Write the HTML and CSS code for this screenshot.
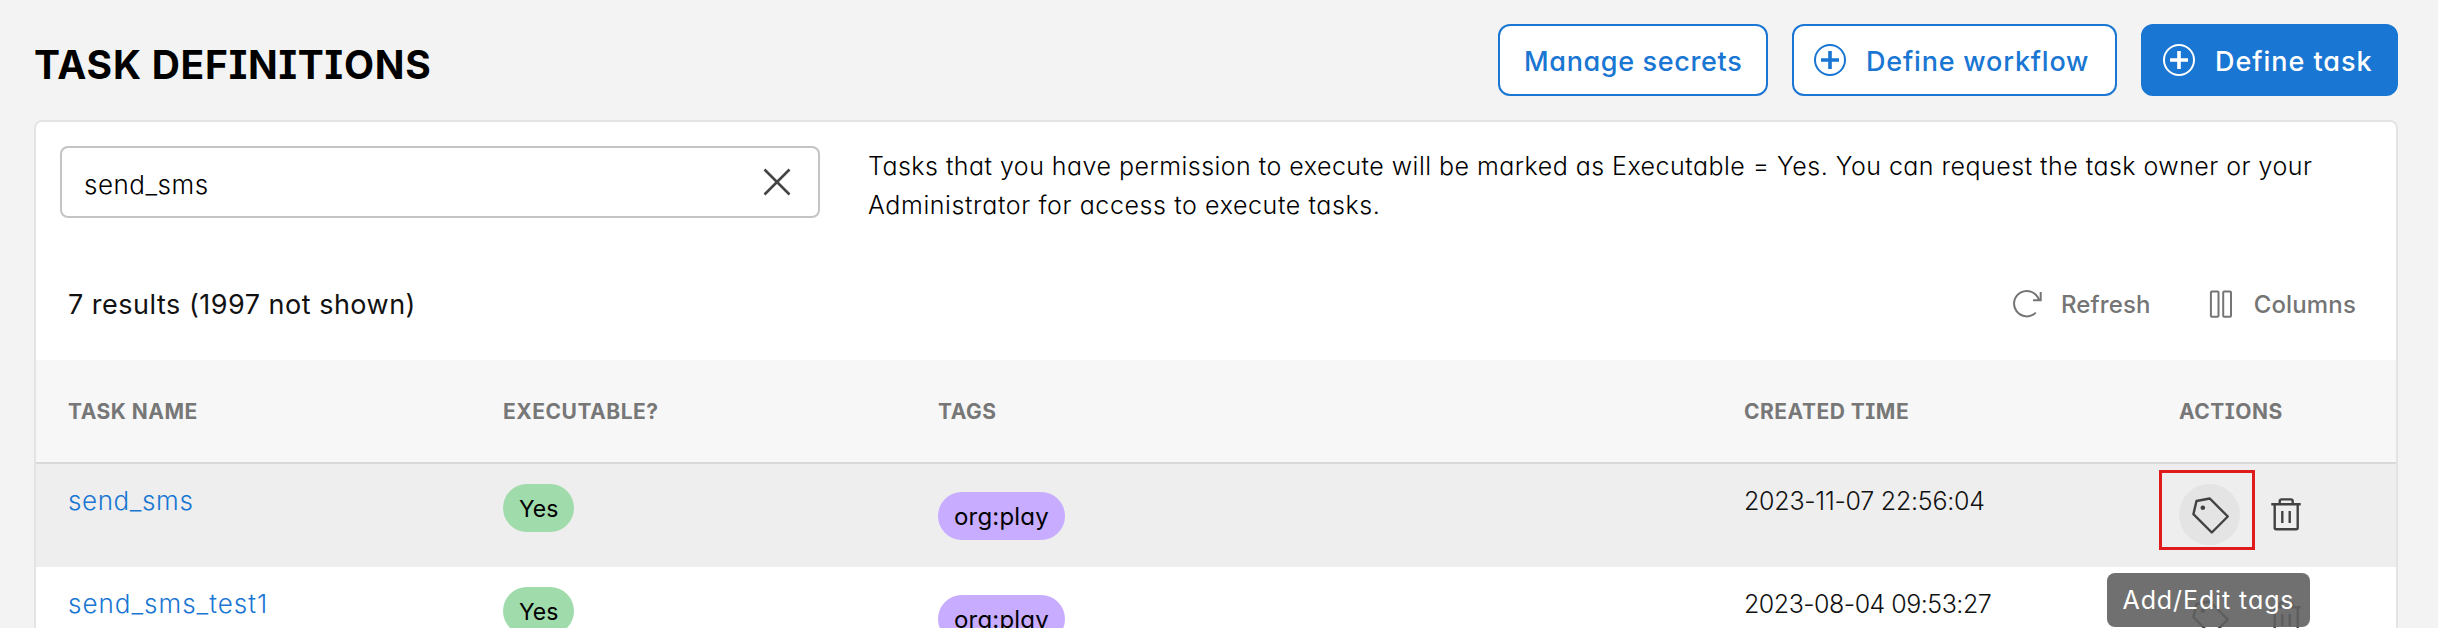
FILE: index.html
```html
<!DOCTYPE html>
<html lang="en">
<head>
<meta charset="utf-8">
<title>Task Definitions</title>
<link rel="stylesheet" href="styles.css">
</head>
<body>
<header class="page-header">
  <h1 class="page-title">TASK DEFINITIONS</h1>
  <div class="header-actions">
    <button class="btn btn-secrets"><span class="label">Manage secrets</span></button>
    <button class="btn btn-workflow"><svg class="plus" viewBox="0 0 32 32"><circle cx="16" cy="16" r="15"/><path d="M16 7v18M7 16h18"/></svg><span class="label">Define workflow</span></button>
    <button class="btn btn-task"><svg class="plus" viewBox="0 0 32 32"><circle cx="16" cy="16" r="15"/><path d="M16 7v18M7 16h18"/></svg><span class="label">Define task</span></button>
  </div>
</header>
<main class="card">
  <section class="filter">
    <div class="search"><span>send_sms</span><svg class="clear" viewBox="0 0 28 28"><path d="M1.5 1.5l25 25M26.5 1.5l-25 25"/></svg></div>
    <p class="hint">Tasks that you have permission to execute will be marked as Executable = Yes. You can request the task owner or your<br><span class="hint-end">Administrator for access to execute tasks.</span></p>
  </section>
  <section class="toolbar">
    <div class="count">7 results (1997 not shown)</div>
    <div class="tools">
      <div class="tool tool-refresh"><svg class="refresh" viewBox="0 0 30 30"><path d="M22.8 23.6A12.7 12.7 0 1 1 25.8 10.6M27.7 3v8.3H20"/></svg><span>Refresh</span></div>
      <div class="tool tool-columns"><svg class="columns" viewBox="0 0 24 30"><rect x="1.9" y="2.5" width="7.6" height="25.3" rx="1"/><rect x="14.2" y="2.5" width="7.8" height="25.3" rx="1"/></svg><span>Columns</span></div>
    </div>
  </section>
  <section class="table">
    <div class="row head"><div>TASK NAME</div><div>EXECUTABLE?</div><div>TAGS</div><div>CREATED TIME</div><div>ACTIONS</div></div>
    <div class="row active">
      <div class="cell"><a class="link">send_sms</a></div>
      <div class="cell"><span class="pill yes">Yes</span></div>
      <div class="cell"><span class="pill tag">org:play</span></div>
      <div class="cell"><span class="date">2023-11-07 22:56:04</span></div>
      <div class="cell actions">
        <span class="icon-btn hover"><svg class="i-tag" viewBox="0 0 38 38"><path d="M5.5 5l13.3-2.5L36.8 20.5 20.8 36.5 2.4 18.2z"/><circle cx="11.8" cy="11.8" r="2.3"/></svg></span>
        <span class="icon-btn trash"><svg class="i-trash" viewBox="0 0 30 34"><path d="M.3 6.3h29.4M3.7 6.3v23.4q0 1.5 1.5 1.5h20q1.5 0 1.5-1.5V6.3M8.7 6V3.4q0-2 2-2h9q2 0 2 2V6M11.3 13v12M18.7 13v12"/></svg></span>
        <span class="highlight"></span>
        <span class="tooltip">Add/Edit tags</span>
      </div>
    </div>
    <div class="row">
      <div class="cell"><a class="link link-long">send_sms_test1</a></div>
      <div class="cell"><span class="pill yes">Yes</span></div>
      <div class="cell"><span class="pill tag">org:play</span></div>
      <div class="cell"><span class="date date-narrow">2023-08-04 09:53:27</span></div>
      <div class="cell actions">
        <span class="icon-btn"><svg class="i-tag" viewBox="0 0 38 38"><path d="M5.5 5l13.3-2.5L36.8 20.5 20.8 36.5 2.4 18.2z"/><circle cx="11.8" cy="11.8" r="2.3"/></svg></span>
        <span class="icon-btn trash"><svg class="i-trash" viewBox="0 0 30 34"><path d="M.3 6.3h29.4M3.7 6.3v23.4q0 1.5 1.5 1.5h20q1.5 0 1.5-1.5V6.3M8.7 6V3.4q0-2 2-2h9q2 0 2 2V6M11.3 13v12M18.7 13v12"/></svg></span>
      </div>
    </div>
  </section>
</main>
</body>
</html>
```
FILE: styles.css
```css
* { box-sizing: border-box; }
body { margin: 0; height: 628px; overflow: hidden; background: #f3f3f3; color: #111; font-family: Inter, sans-serif; font-feature-settings: "cv11", "cv08"; font-size: 26px; }
svg { fill: none; stroke: currentColor; stroke-width: 2; flex: none; }
.page-header { height: 120px; padding: 24px 40px 0 34px; display: flex; justify-content: space-between; align-items: flex-start; }
.page-title { margin: 17px 0 0; font-size: 39px; line-height: 48px; font-weight: 700; letter-spacing: .75px; color: #000; white-space: nowrap; }
.header-actions { display: flex; gap: 24px; }
.btn { height: 72px; border: 2px solid #1976d2; border-radius: 12px; background: #fff; color: #1976d2; font: 500 27px/32px Inter, sans-serif; font-feature-settings: inherit; letter-spacing: .8px; padding: 0; display: flex; align-items: center; gap: 20px; white-space: nowrap; }
.label { padding-top: 3px; }
.btn-secrets { width: 270px; padding-left: 24px; letter-spacing: .65px; }
.btn-workflow { width: 325px; padding-left: 20px; }
.btn-task { width: 257px; padding-left: 20px; background: #1976d2; color: #fff; letter-spacing: .95px; }
.plus { width: 32px; height: 32px; }
.plus path { stroke-width: 3.6; }
.card { margin: 0 40px 0 34px; height: 508px; overflow: hidden; background: #fff; border: 2px solid #e4e4e4; border-bottom: 0; border-radius: 8px 8px 0 0; }
.filter { height: 158px; padding: 24px 0 0 24px; display: flex; gap: 48px; }
.search { width: 760px; height: 72px; border: 2px solid #c4c4c4; border-radius: 8px; padding: 4px 27px 0 22px; display: flex; align-items: center; justify-content: space-between; font-weight: 300; letter-spacing: .5px; color: #000; }
.clear { width: 28px; height: 28px; color: #444; margin-top: -5px; stroke-width: 2.6; }
.hint { margin: 1px 0 0; font-size: 25px; line-height: 39px; font-weight: 300; letter-spacing: .475px; color: #000; white-space: nowrap; }
.hint-end { letter-spacing: .6px; }
.toolbar { height: 80px; padding: 9px 40px 0 32px; display: flex; justify-content: space-between; }
.count { font-size: 27px; line-height: 32px; letter-spacing: .5px; }
.tools { display: flex; gap: 58px; color: #757575; font-size: 24px; line-height: 31px; font-weight: 500; letter-spacing: .15px; }
.tool { display: flex; }
.tool-refresh { gap: 18px; }
.tool-columns { gap: 21px; }
.refresh { width: 30px; height: 30px; }
.columns { width: 24px; height: 30px; }
.row { display: grid; grid-template-columns: 435px 435px 806px 435px 1fr; padding-left: 32px; height: 103px; }
.head { height: 104px; background: #f7f7f7; border-bottom: 2px solid #d9d9d9; color: #777; font-size: 21px; font-weight: 700; line-height: 28px; letter-spacing: .5px; padding-top: 38px; }
.active { background: #eee; }
.cell { padding-top: 20px; font-size: 26px; line-height: 36px; font-weight: 300; }
.link, .date { display: block; margin-top: -1px; }
.link { color: #1976d2; letter-spacing: .6px; }
.link-long { letter-spacing: 1px; }
.date { font-size: 25px; letter-spacing: -.25px; }
.date-narrow { letter-spacing: -.5px; }
.pill { display: flex; align-items: center; height: 48px; border-radius: 24px; font-size: 24px; line-height: 30px; color: #000; font-weight: 400; width: max-content; padding: 1px 16px 0; }
.yes { background: #a0dbab; font-size: 23px; }
.tag { background: #c7acff; margin-top: 8px; letter-spacing: .2px; }
.actions { display: flex; position: relative; color: #424242; }
.icon-btn { width: 61px; height: 61px; border-radius: 50%; display: flex; align-items: center; justify-content: center; }
.hover { background: #e4e4e4; }
.i-tag { width: 38px; height: 38px; stroke-width: 2.4; stroke-linejoin: round; }
.i-tag circle { fill: currentColor; stroke: none; }
.trash { margin-left: 15.5px; }
.i-trash { width: 30px; height: 34px; stroke-width: 2.4; }
.highlight { position: absolute; left: -20px; top: 6px; width: 96px; height: 80px; border: 3px solid #e01b1b; }
.tooltip { position: absolute; z-index: 2; left: -72px; top: 109px; width: 203px; height: 54px; border-radius: 8px; background: rgba(97,97,97,.9); color: #fff; display: flex; align-items: center; justify-content: center; font-size: 25px; font-weight: 400; letter-spacing: .9px; white-space: nowrap; }
```
